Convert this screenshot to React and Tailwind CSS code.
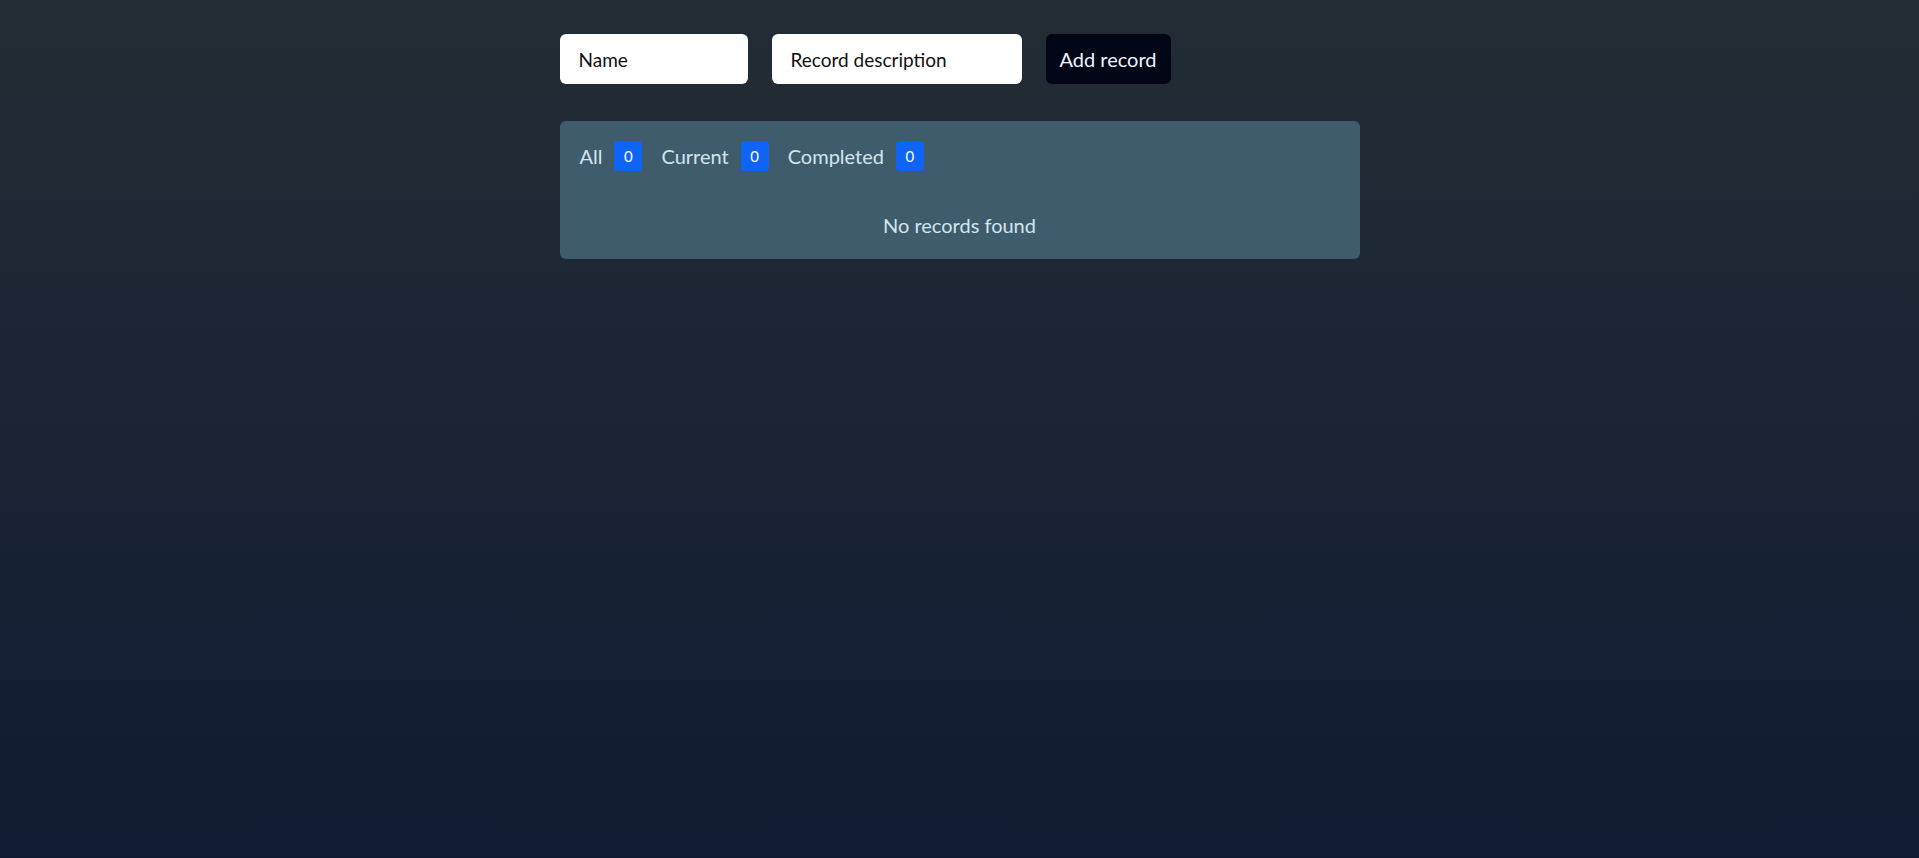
import React, { useState } from 'react'

const tabs = [
  { key: 'all', label: 'All' },
  { key: 'current', label: 'Current' },
  { key: 'completed', label: 'Completed' },
]

export default function App(){
  const [name, setName] = useState('')
  const [desc, setDesc] = useState('')
  const [records, setRecords] = useState([])

  const add = () => {
    if(!name.trim()) return
    setRecords([...records, { id: Date.now(), name, desc, done: false }])
    setName('')
    setDesc('')
  }

  const counts = {
    all: records.length,
    current: records.filter(r => !r.done).length,
    completed: records.filter(r => r.done).length,
  }

  return (
    <div className="min-h-screen bg-gradient-to-b from-[#242c34] to-[#101b33] font-['Lato','Liberation_Sans',sans-serif]">
      <div className="w-[800px] mx-auto pt-[34px]">
        <div className="flex gap-6">
          <input
            value={name}
            onChange={e => setName(e.target.value)}
            placeholder="Name"
            className="w-[188px] h-[50px] rounded-md bg-white px-[19px] text-[19px] text-black placeholder:text-[#111] outline-none"
          />
          <input
            value={desc}
            onChange={e => setDesc(e.target.value)}
            placeholder="Record description"
            className="w-[250px] h-[50px] rounded-md bg-white px-[19px] text-[19px] text-black placeholder:text-[#111] outline-none"
          />
          <button onClick={add} className="w-[125px] h-[50px] rounded-md bg-[#020617] text-[20px] text-[#eef4ff]">
            Add record
          </button>
        </div>

        <div className="mt-[37px] rounded-md bg-[#3e5c6c] px-5 pt-5 pb-5 text-[#d2e5ee]">
          <div className="flex items-center gap-[19px] h-[30px]">
            {tabs.map(t => (
              <div key={t.key} className="flex items-center text-[20px]">
                <span>{t.label}</span>
                <span className="ml-3 w-[28px] h-[30px] rounded-[4px] bg-[#0d64f7] text-white text-[15px] flex items-center justify-center">
                  {counts[t.key]}
                </span>
              </div>
            ))}
          </div>
          <div className="mt-[40px] text-center text-[20px] leading-[28px]">
            {records.length === 0 ? 'No records found' : records.map(r => <div key={r.id}>{r.name}</div>)}
          </div>
        </div>
      </div>
    </div>
  )
}
